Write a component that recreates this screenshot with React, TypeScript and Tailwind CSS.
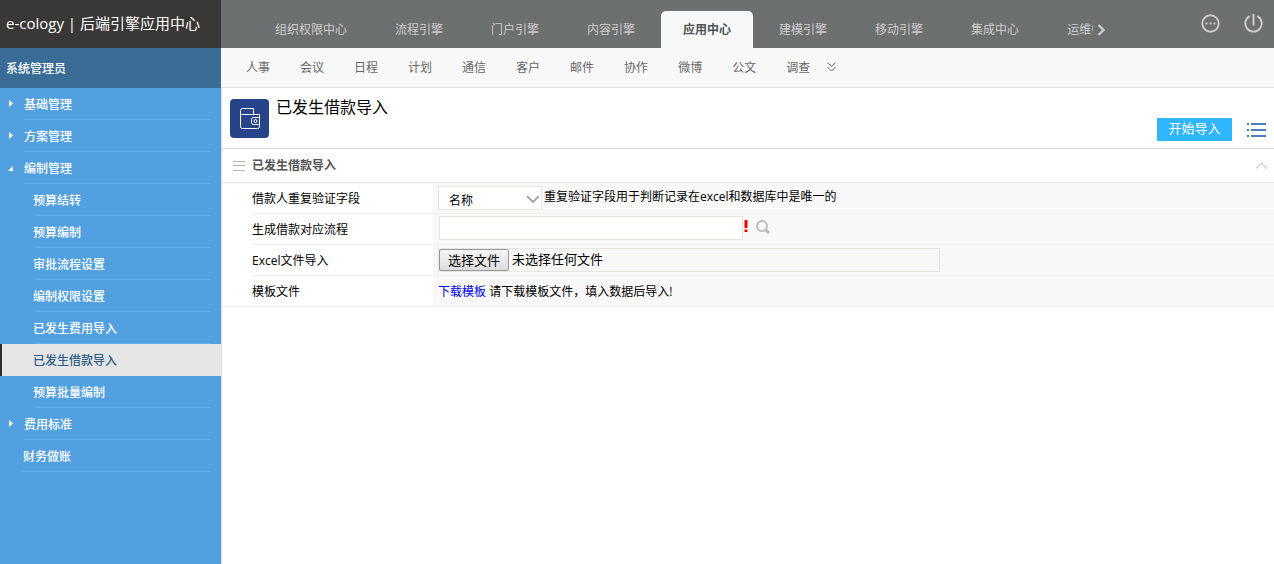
import React, { useRef, useState } from "react";
import clsx from "clsx";

const tabs = ["组织权限中心", "流程引擎", "门户引擎", "内容引擎", "应用中心", "建模引擎", "移动引擎", "集成中心", "运维中心"];
const subTabs = ["人事", "会议", "日程", "计划", "通信", "客户", "邮件", "协作", "微博", "公文", "调查"];

type MenuItem = { name: string; open?: boolean; leaf?: boolean; children?: string[] };

const menu: MenuItem[] = [
    { name: "基础管理" },
    { name: "方案管理" },
    {
        name: "编制管理",
        open: true,
        children: ["预算结转", "预算编制", "审批流程设置", "编制权限设置", "已发生费用导入", "已发生借款导入", "预算批量编制"],
    },
    { name: "费用标准" },
    { name: "财务做账", leaf: true },
];

function Sidebar() {
    const [current, setCurrent] = useState("已发生借款导入");

    return (
        <aside className="w-[221px] shrink-0 bg-[#52a0df] text-white">
            <div className="h-12 bg-[#393836] flex items-center pl-1.5 pb-0.5 text-[15px] whitespace-nowrap">e-cology | 后端引擎应用中心</div>
            <div className="h-10 bg-[#3a6c96] flex items-center pl-1.5 pt-0.5 font-medium">系统管理员</div>
            <ul>
                {menu.map((item) => (
                    <li key={item.name}>
                        <a href="#" className={clsx("h-8 flex items-center pr-2.5", item.leaf ? "pl-[23px]" : "pl-2")}>
                            {!item.leaf && (
                                <svg className="w-4 h-2 shrink-0" viewBox="0 0 16 8" fill="currentColor">
                                    {item.open ? <path d="M5 2v5H0z" /> : <path d="M1 0l4 3.5L1 7z" />}
                                </svg>
                            )}
                            <span className="flex-1 h-8 pt-0.5 leading-[30px] border-b border-[#62afee] font-medium">{item.name}</span>
                        </a>
                        {item.children && (
                            <ul>
                                {item.children.map((child) => (
                                    <li key={child}>
                                        <a
                                            href="#"
                                            onClick={() => setCurrent(child)}
                                            className={clsx("h-8 flex pr-2.5 border-l-2 pl-[31px]", child === current ? "bg-[#e5e5e5] border-[#2b2b2b] text-[#2f5f8a]" : "border-transparent")}
                                        >
                                            <span className={clsx("flex-1 h-8 pt-0.5 leading-[30px] border-b font-medium", child === current ? "border-transparent" : "border-[#62afee]")}>{child}</span>
                                        </a>
                                    </li>
                                ))}
                            </ul>
                        )}
                    </li>
                ))}
            </ul>
        </aside>
    );
}

function TopNav() {
    return (
        <header className="h-12 bg-[#6c7070] text-[#cdcdcd] flex items-end pl-8">
            <nav className="flex gap-1 min-w-0 w-[840px] overflow-hidden">
                {tabs.map((t) => (
                    <a
                        key={t}
                        href="#"
                        className={clsx("h-[37px] leading-[37px] px-[22px] shrink-0 whitespace-nowrap", t === "应用中心" && "bg-[#f8f8f8] text-[#4e5252] font-bold rounded-t-[5px]")}
                    >
                        {t}
                    </a>
                ))}
            </nav>
            <button aria-label="更多" className="h-9 w-4 flex items-start pt-3 pl-1 shrink-0">
                <svg width="9" height="12" viewBox="0 0 9 12" fill="none" stroke="currentColor" strokeWidth="2.4">
                    <path d="M1.5 1l5 5-5 5" />
                </svg>
            </button>
            <div className="ml-auto h-12 flex items-center gap-6 pr-[11px] pb-0.5">
                <button aria-label="消息">
                    <svg width="19" height="19" viewBox="0 0 19 19" fill="none" stroke="currentColor" strokeWidth="1.9">
                        <circle cx="9.5" cy="9.5" r="8.2" />
                        <path d="M4.5 9.5h2M8.5 9.5h2M12.5 9.5h2" strokeWidth="2" />
                    </svg>
                </button>
                <button aria-label="退出">
                    <svg width="19" height="19" viewBox="0 0 19 19" fill="none" stroke="currentColor" strokeWidth="1.9">
                        <path d="M5.6 2.2a8.2 8.2 0 1 0 7.8 0M9.5 0v11.5" />
                    </svg>
                </button>
            </div>
        </header>
    );
}

function SubNav() {
    return (
        <nav className="h-10 bg-[#f8f8f8] border-b border-[#e2e2e2] text-[#666] flex items-center gap-[30px] pl-[25px]">
            {subTabs.map((t) => (
                <a key={t} href="#" className="whitespace-nowrap">{t}</a>
            ))}
            <button aria-label="展开" className="-ml-[13px] pb-0.5">
                <svg width="9" height="10" viewBox="0 0 9 10" fill="none" stroke="currentColor">
                    <path d="M.5.5l4 4 4-4M.5 5l4 4 4-4" />
                </svg>
            </button>
        </nav>
    );
}

function Row({ label, htmlFor, last, children }: { label: string; htmlFor?: string; last?: boolean; children: React.ReactNode }) {
    return (
        <div className={clsx("flex h-[31px]", last ? "border-b border-[#f0f0f0]" : "pl-[30px]")}>
            <label htmlFor={htmlFor} className={clsx("shrink-0 flex items-center pt-0.5", last ? "pl-[30px] w-[211px]" : "w-[181px] border-b border-[#f0f0f0]")}>
                {label}
            </label>
            <div className={clsx("flex-1 min-w-0 bg-[#f8f8f8] flex items-center pl-[5px]", !last && "border-b border-[#f0f0f0]")}>{children}</div>
        </div>
    );
}

function ImportForm() {
    const fileRef = useRef<HTMLInputElement>(null);
    const [fileName, setFileName] = useState("未选择任何文件");

    return (
        <form>
            <Row label="借款人重复验证字段" htmlFor="field">
                <div className="relative w-[104px] shrink-0">
                    <select id="field" className="appearance-none block w-full h-6 pl-2.5 pt-1 border border-[#e6e6de] bg-white leading-5">
                        <option>名称</option>
                    </select>
                    <svg className="absolute right-0.5 top-[9px] pointer-events-none" width="14" height="9" viewBox="0 0 14 9" fill="none" stroke="#a8a8a8" strokeWidth="2">
                        <path d="M1 1l6 6 6-6" />
                    </svg>
                </div>
                <span className="pl-0.5 pb-0.5 whitespace-nowrap">重复验证字段用于判断记录在excel和数据库中是唯一的</span>
            </Row>
            <Row label="生成借款对应流程" htmlFor="flow">
                <input id="flow" type="text" className="w-[304px] h-6 ml-px mb-0.5 px-1 border border-[#e6e6de] bg-white outline-none" />
                <svg className="ml-px mb-1.5 shrink-0" width="4" height="12" viewBox="0 0 4 12" fill="#f00000">
                    <path d="M.5 0h3v8h-3zM.5 9.5h3V12h-3z" />
                </svg>
                <button type="button" aria-label="查找" className="ml-2 mb-1">
                    <svg width="14" height="14" viewBox="0 0 14 14" fill="none" stroke="#bcbcbc">
                        <circle cx="6" cy="6" r="5" strokeWidth="2" />
                        <path d="M9.5 9.5l3.5 3.5" strokeWidth="3" />
                    </svg>
                </button>
            </Row>
            <Row label="Excel文件导入" htmlFor="file">
                <div className="w-[502px] h-6 border border-[#e6e6de] flex items-center text-[13px]">
                    <input ref={fileRef} id="file" type="file" className="hidden" onChange={(e) => setFileName(e.target.files?.[0]?.name || "未选择任何文件")} />
                    <button
                        type="button"
                        onClick={() => fileRef.current?.click()}
                        className="w-[70px] h-[22px] shrink-0 flex items-center justify-center border border-[#999] rounded-[2px] bg-gradient-to-b from-[#f5f5f5] to-[#dddddd]"
                    >
                        选择文件
                    </button>
                    <span className="pl-[3px] pb-0.5 whitespace-nowrap">{fileName}</span>
                </div>
            </Row>
            <Row label="模板文件" last>
                <span className="whitespace-nowrap pt-0.5">
                    <a href="#" className="text-[#0000ee]">下载模板</a> 请下载模板文件，填入数据后导入!
                </span>
            </Row>
        </form>
    );
}

export default function App() {
    return (
        <div className="min-h-screen flex bg-white text-black text-[12px] leading-4 font-['Open_Sans','Noto_Sans_CJK_SC',sans-serif]">
            <Sidebar />
            <div className="flex-1 min-w-0 flex flex-col">
                <TopNav />
                <SubNav />
                <main className="flex-1 border-l border-[#dcdcdc]">
                    <div className="h-[61px] border-b border-[#dadada] flex px-2">
                        <div className="w-[39px] h-[39px] mt-[11px] rounded-[4px] bg-[#27438a] shrink-0">
                            <svg width="39" height="39" viewBox="0 0 39 39" fill="none" stroke="#fff">
                                <path d="M10.5 15.5v-4a2 2 0 0 1 2-2h11v6" />
                                <path d="M10.5 15.5h19v12a2 2 0 0 1-2 2h-15a2 2 0 0 1-2-2z" />
                                <path d="M29.5 18.5h-6a2 2 0 0 0-2 2v3a2 2 0 0 0 2 2h6" />
                                <circle cx="25.5" cy="22" r="1.5" />
                            </svg>
                        </div>
                        <h1 className="text-[16px] leading-6 pl-[7px] pt-[7px]">已发生借款导入</h1>
                        <div className="ml-auto mt-[30px] h-[23px] flex items-center gap-[15px]">
                            <button className="w-[75px] h-[23px] bg-[#30b5ff] text-white text-[13px] leading-[21px] pb-0.5">开始导入</button>
                            <button aria-label="菜单">
                                <svg width="19" height="14" viewBox="0 0 19 14" stroke="#4a7dbd" strokeWidth="2">
                                    <path d="M0 1h2M4 1h15M0 7h2M4 7h15M0 13h2M4 13h15" />
                                </svg>
                            </button>
                        </div>
                    </div>
                    <div className="h-[34px] border-b border-[#e4e4e4] flex items-center pl-[11px] pr-1.5">
                        <svg width="12" height="10" viewBox="0 0 12 10" stroke="#b4b4b4">
                            <path d="M0 .5h12M0 4.5h12M0 9.5h12" />
                        </svg>
                        <h2 className="pl-[7px] pt-px font-bold text-[#555]">已发生借款导入</h2>
                        <button aria-label="收起" className="ml-auto">
                            <svg width="13" height="7" viewBox="0 0 13 7" fill="none" stroke="#ccc" strokeWidth="1.2">
                                <path d="M1 6.5l5.5-5.5L12 6.5" />
                            </svg>
                        </button>
                    </div>
                    <ImportForm />
                </main>
            </div>
        </div>
    );
}
